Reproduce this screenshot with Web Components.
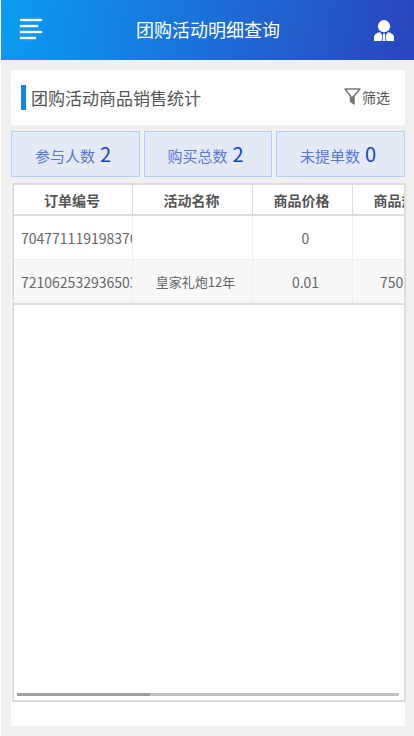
<!DOCTYPE html>
<html lang="zh"><head><meta charset="utf-8"><title>团购活动明细查询</title>
<style>
html,body{margin:0;padding:0;background:#fff;height:736px;overflow:hidden}
body{font-family:"Noto Sans CJK SC","Liberation Sans",sans-serif}
</style></head><body>
<app-page>
  <app-header title-text="团购活动明细查询"></app-header>
  <title-card title-text="团购活动商品销售统计"></title-card>
  <stat-row>
    <stat-box label="参与人数" value="2"></stat-box>
    <stat-box label="购买总数" value="2"></stat-box>
    <stat-box label="未提单数" value="0"></stat-box>
  </stat-row>
  <table-card>
    <table-row head><span>订单编号</span><span>活动名称</span><span>商品价格</span><span>商品规格</span></table-row>
    <table-row><span>704771119198376</span><span></span><span>0</span><span></span></table-row>
    <table-row alt><span>721062532936503</span><span class="s">皇家礼炮12年</span><span>0.01</span><span class="w">750ml</span></table-row>
  </table-card>
</app-page>
<script>
function def(name, html, init){
  customElements.define(name, class extends HTMLElement{
    connectedCallback(){
      if(this.shadowRoot) return;
      const r=this.attachShadow({mode:'open'});
      r.innerHTML=html;
      if(init) init(this,r);
    }
  });
}
def('app-page',`<style>:host{display:flex;flex-direction:column;height:736px;margin-left:1px;background:#f0f0f0}</style><slot></slot>`);
def('app-header',`<style>
:host{display:flex;flex:none;height:60px;align-items:center;justify-content:space-between;padding:0 19px 0 18px;background:linear-gradient(100deg,#0a9cf3 0%,#1b6fd8 50%,#2a44bf 100%);color:#fff;font-size:18px}
svg{display:block;flex:none}
#t{white-space:nowrap;position:relative;top:-1px}
</style>
<svg width="24" height="22" viewBox="0 0 24 22" fill="#fff" style="filter:drop-shadow(0 0 1px rgba(255,255,255,.55))"><rect x="1" y="0" width="22" height="2"/><rect x="1" y="6" width="18" height="2"/><rect x="1" y="12" width="22" height="2"/><rect x="1" y="18" width="16" height="2"/></svg>
<span id="t"></span>
<svg width="22" height="24" viewBox="0 0 22 24"><circle cx="11" cy="8.200" r="6.100" fill="#fff"/><path d="M1 23v-3.500c0-3 2.500-4.500 6-5.500l2.200 3.500-.7 5.500zM21 23v-3.500c0-3-2.500-4.500-6-5.500l-2.200 3.500.7 5.500zM10 15.500h2l.5 7.500h-3z" fill="#fff"/></svg>`,
(h,r)=>{r.getElementById('t').textContent=h.getAttribute('title-text')});
def('title-card',`<style>
:host{display:flex;flex:none;height:55px;margin:10px 9px 0 10px;background:#fff;align-items:center;padding:0 15px 0 10px;box-sizing:border-box;color:#555}
i{display:block;width:5px;height:25px;background:#1287e6;margin-right:5px}
#t{font-size:17px;flex:1;white-space:nowrap;position:relative;top:-.5px}
#f{display:flex;align-items:center;font-size:14px;gap:1px;color:#555;position:relative;top:-1px}
svg{display:block}
</style><i></i><span id="t"></span><span id="f"><svg width="17" height="17" viewBox="0 0 17 17"><path d="M1 1h15l-6 7v8l-3.500-2.500v-5.500z" fill="none" stroke="#777" stroke-width="1.500" stroke-linejoin="round"/><path d="M7 8.500l3-.5v7.500l-3-2z" fill="#777"/></svg><span>筛选</span></span>`,
(h,r)=>{r.getElementById('t').textContent=h.getAttribute('title-text')});
def('stat-row',`<style>:host{display:grid;flex:none;grid-template-columns:129px 128px 129px;gap:4px;margin:6px 9px 0 10px;height:46px}</style><slot></slot>`);
def('stat-box',`<style>
:host{display:flex;align-items:center;justify-content:center;gap:5px;box-sizing:border-box;border:1px solid #b4cdfb;background:#e4eaf5;color:#5878d6;white-space:nowrap;font-size:15px;padding:2px 5px 0 0}
b{font-weight:400;font-size:20px;color:#0f45c5;line-height:1;position:relative;top:-1px}
</style><span id="l"></span><b id="v"></b>`,
(h,r)=>{r.getElementById('l').textContent=h.getAttribute('label');r.getElementById('v').textContent=h.getAttribute('value')});
def('table-card',`<style>
:host{display:block;flex:1;min-height:0;margin:6px 9px 10px 10px;background:#fff;padding-bottom:24px;box-sizing:border-box}
#box{position:relative;box-sizing:border-box;height:100%;margin:0 -1px 0 1px;border:2px solid #ddd;background:#fff;overflow:hidden}
#scroll{overflow:hidden;height:100%}
#in{width:1126px}
#bar{position:absolute;left:3px;right:5px;bottom:4px;height:3px;background:#bfbfbf}
#th{position:absolute;left:0;top:0;bottom:0;width:133px;background:#9e9e9e}
</style><div id="box"><div id="scroll"><div id="in"><slot></slot></div></div><div id="bar"><div id="th"></div></div></div>`);
def('table-row',`<style>
:host{display:grid;grid-template-columns:119px 120px 100px 100px;height:44px;box-sizing:border-box;border-bottom:1px solid #eee;font-size:14px;color:#666;background:#fff}
:host([alt]){background:#f8f8f8;height:45px;border-bottom:2px solid #ddd}
:host([head]){height:31px;border-bottom:2px solid #ddd;font-weight:700;color:#555}
::slotted(span){display:flex;align-items:center;justify-content:center;box-sizing:border-box;border-right:1px solid #eee;white-space:nowrap;overflow:hidden;min-width:0;padding-left:6px}
:host([head]) ::slotted(span){border-right:1px solid #ddd;padding-left:0;padding-right:2px}
::slotted(span:first-child){justify-content:flex-start;padding-left:7px}
:host([head]) ::slotted(span:first-child){justify-content:center;padding-left:0;padding-right:2px}
::slotted(.s){font-size:13px}
::slotted(.w){padding-left:0;padding-right:5px}
</style><slot></slot>`);
</script>
</body></html>
